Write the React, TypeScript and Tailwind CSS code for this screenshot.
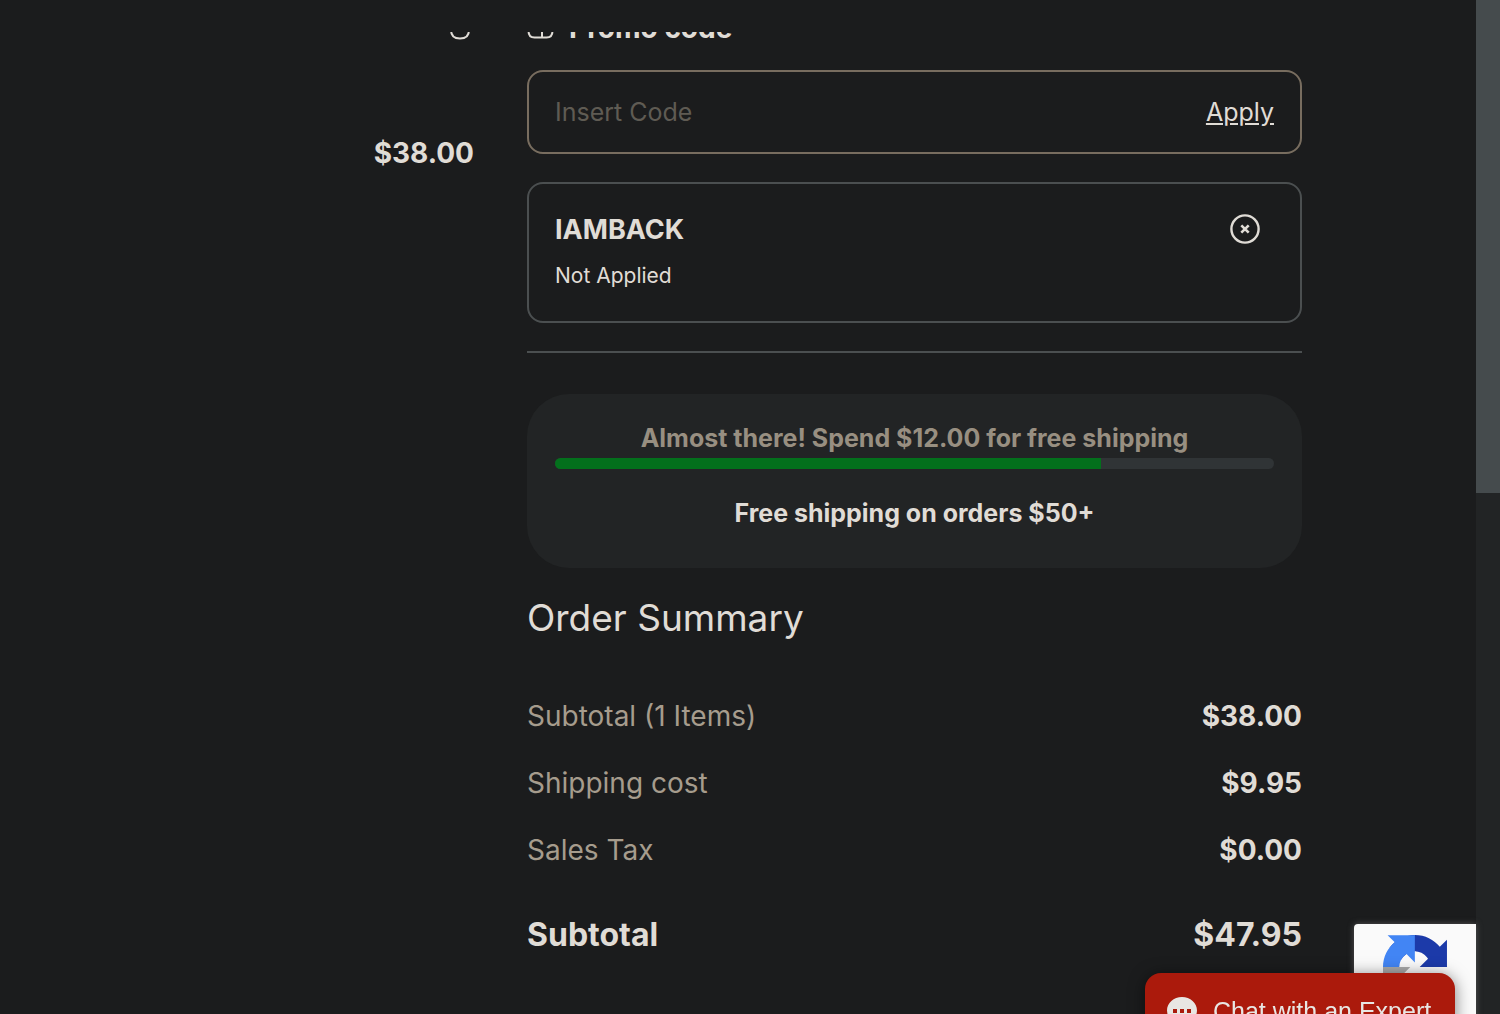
const rows = [
  { label: "Subtotal (1 Items)", value: "$38.00" },
  { label: "Shipping cost", value: "$9.95" },
  { label: "Sales Tax", value: "$0.00" },
];

const freeShippingProgress = 76;

function TrashIcon() {
  return (
    <svg width="26" height="30" viewBox="0 0 26 30" fill="none" stroke="currentColor" strokeWidth="2">
      <path d="M1 6h24M8 6V2h10v4M4 6v14c0 6 3 8.500 9 8.500s9-2.500 9-8.500V6" />
    </svg>
  );
}

function PromoIcon() {
  return (
    <svg width="27" height="22" viewBox="0 0 27 22" fill="none" stroke="currentColor" strokeWidth="2">
      <path d="M1.500 8V6c0-3.500 2-5 6-5h12c4 0 6 1.500 6 5v2a3 3 0 0 0 0 6c0 4.500-2 6.500-6 6.500h-12c-4 0-6-2-6-6.500a3 3 0 0 0 0-6z" />
      <path d="M15 1v20" />
    </svg>
  );
}

function RemoveIcon() {
  return (
    <svg width="30" height="30" viewBox="0 0 30 30" fill="none" stroke="currentColor">
      <circle cx="15" cy="15" r="13.600" strokeWidth="2.400" />
      <path d="M11.300 11.300l7.400 7.400M18.700 11.300l-7.400 7.400" strokeWidth="2.600" />
    </svg>
  );
}

function RecaptchaLogo() {
  return (
    <svg width="64" height="64" viewBox="0 0 64 64">
      <path
        fill="#1c3aa9"
        d="M64 31.955l-.033-1.370V4.687l-7.160 7.160C50.948 4.674 42.033.093 32.050.093c-10.400 0-19.622 4.960-25.458 12.640l11.736 11.860a15.550 15.550 0 0 1 4.754-5.334c2.050-1.600 4.952-2.906 8.968-2.906.485 0 .860.057 1.135.163 4.976.393 9.288 3.140 11.828 7.124l-8.307 8.307L64 31.953"
      />
      <path
        fill="#4285f4"
        d="M31.862.094l-1.370.033H4.594l7.160 7.160C4.580 13.147 0 22.060 0 32.046c0 10.400 4.960 19.622 12.640 25.458L24.500 45.768a15.550 15.550 0 0 1-5.334-4.754c-1.600-2.050-2.906-4.952-2.906-8.968 0-.485.057-.860.163-1.135.393-4.976 3.140-9.288 7.124-11.828l8.307 8.307L31.860.095"
      />
      <path
        fill="#ababab"
        d="M.001 32.045l.033 1.370v25.898l7.160-7.160c5.860 7.173 14.774 11.754 24.760 11.754 10.400 0 19.622-4.960 25.458-12.640l-11.736-11.860a15.550 15.550 0 0 1-4.754 5.334c-2.050 1.600-4.952 2.906-8.968 2.906-.485 0-.860-.057-1.135-.163-4.976-.393-9.288-3.140-11.828-7.124l8.307-8.307c-10.522.040-22.400.066-27.295-.005"
      />
    </svg>
  );
}

function ChatIcon() {
  return (
    <svg width="30" height="30" viewBox="0 0 30 30" className="shrink-0">
      <path fill="#e8e6e3" d="M15 0C6.700 0 0 6 0 13.600c0 4.400 2.300 8.200 5.800 10.700V30l6-3.200c1 .200 2.100.300 3.200.300 8.300 0 15-6 15-13.500S23.300 0 15 0z" />
      <path fill="#ab1a0c" d="M6 12h4v4H6zM13 12h4v4h-4zM20 12h4v4h-4z" />
    </svg>
  );
}

function PromoCode() {
  return (
    <section>
      <h2 className="flex items-center gap-[15px] text-[28px] leading-9 font-bold">
        <PromoIcon />
        Promo code
      </h2>
      <form className="mt-6 flex h-[84px] items-center rounded-2xl border-2 border-[#786d5f] px-[26px] pt-0.5 text-[25px]">
        <input
          type="text"
          aria-label="Promo code"
          placeholder="Insert Code"
          className="min-w-0 flex-1 bg-transparent outline-none placeholder:text-[#5f5b53]"
        />
        <button type="button" className="underline">
          Apply
        </button>
      </form>
      <div className="mt-7 flex h-[141px] items-start justify-between rounded-2xl border-2 border-[#4b4f50] pt-[26px] pr-10 pl-[26px]">
        <div>
          <p className="text-[27px] leading-10 font-bold">IAMBACK</p>
          <p className="mt-2.5 text-[21px] leading-8">Not Applied</p>
        </div>
        <button type="button" aria-label="Remove IAMBACK" className="mt-1">
          <RemoveIcon />
        </button>
      </div>
    </section>
  );
}

function FreeShipping() {
  return (
    <section className="mt-[41px] h-[174px] rounded-[42px] bg-[#222425] px-7 pt-7 text-center text-[25px] leading-8 font-bold">
      <p className="text-[#988f81]">Almost there! Spend $12.00 for free shipping</p>
      <div className="mt-1 h-[11px] overflow-hidden rounded-full bg-[#303436]">
        <div className="h-full bg-[#03701c]" style={{ width: `${freeShippingProgress}%` }} />
      </div>
      <p className="mt-7">Free shipping on orders $50+</p>
    </section>
  );
}

function OrderSummary() {
  return (
    <section className="mt-6">
      <h2 className="text-[37px] leading-[52px]">Order Summary</h2>
      <dl className="mt-[52px] text-[28px] leading-10">
        {rows.map((row) => (
          <div key={row.label} className="mt-[27px] flex justify-between first:mt-0">
            <dt className="text-[#a69c8d]">{row.label}</dt>
            <dd className="font-bold">{row.value}</dd>
          </div>
        ))}
        <div className="mt-[45px] flex justify-between text-[32px] font-bold">
          <dt>Subtotal</dt>
          <dd>$47.95</dd>
        </div>
      </dl>
    </section>
  );
}

export default function App() {
  return (
    <div className="flex h-screen overflow-hidden bg-[#1b1c1d] font-['Inter',sans-serif] text-[#e0dcd6]">
      <header className="fixed top-0 right-6 left-0 z-10 h-8 bg-[#1b1c1d]" />

      <main className="grid min-w-0 flex-1 grid-cols-[474fr_775fr] gap-x-[53px] pt-2.5 pr-[174px]">
        {/* Cart item */}
        <div className="flex flex-col items-end">
          <button type="button" aria-label="Remove item" className="mr-px">
            <TrashIcon />
          </button>
          <p className="mt-[95px] text-[28px] leading-9 font-bold">$38.00</p>
        </div>

        {/* Checkout column */}
        <div>
          <PromoCode />
          <hr className="mt-7 border-t-2 border-[#4b4f50]" />
          <FreeShipping />
          <OrderSummary />
        </div>
      </main>

      {/* Scrollbar */}
      <div className="w-6 shrink-0 bg-[#222425]">
        <div className="h-[493px] bg-[#454b4d]" />
      </div>

      <div className="fixed right-6 -bottom-4 flex h-[106px] w-[122px] justify-center rounded-l-sm bg-[#fafafa] pt-[11px] shadow-[0_0_6px_#555]">
        <RecaptchaLogo />
      </div>
      <button
        type="button"
        className="fixed right-[45px] -bottom-9 flex h-[77px] w-[310px] items-center gap-4 rounded-2xl bg-[#ab1a0c] px-[22px] font-['Liberation_Sans',sans-serif] text-[25px] whitespace-nowrap text-[#e8e6e3] shadow-[0_2px_16px_rgba(0,0,0,0.5)]"
      >
        <ChatIcon />
        Chat with an Expert
      </button>
    </div>
  );
}
